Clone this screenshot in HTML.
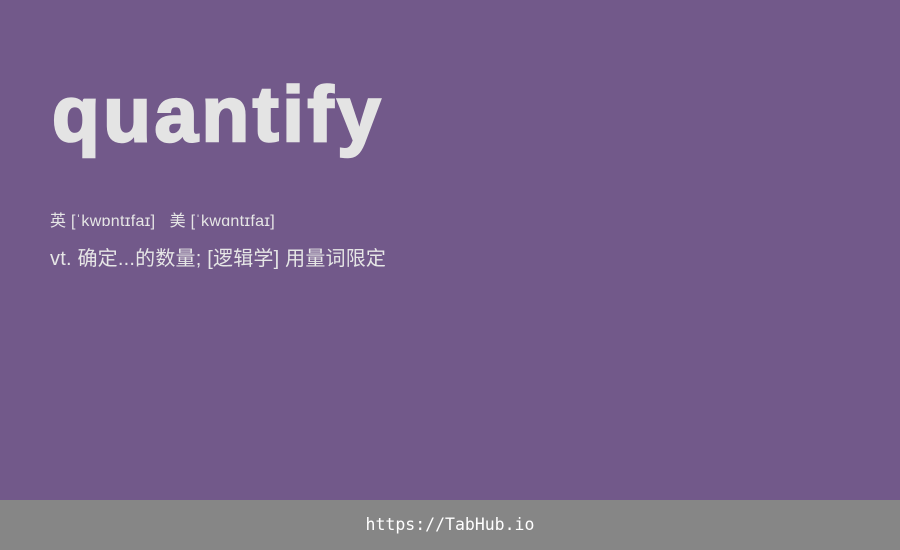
<!DOCTYPE html>
<html><head><meta charset="utf-8"><style>
body{margin:0;width:900px;height:550px;background:#72598a;position:relative;overflow:hidden;font-family:"Liberation Sans","Noto Sans CJK SC",sans-serif;color:#e6e6e6}
.w{position:absolute;left:52px;top:64px;font-size:78px;font-weight:bold;line-height:100px;color:#e4e4e4;-webkit-text-stroke:2.5px #e4e4e4;letter-spacing:3.6px}
.p{position:absolute;left:50px;top:212px;font-size:16px;line-height:20px;letter-spacing:0.3px}
.d{position:absolute;left:50px;top:247px;font-size:20px;line-height:24px;letter-spacing:0.2px}
.f{position:absolute;left:0;top:500px;width:900px;height:50px;background:#868686;color:#fff;font-family:"DejaVu Sans Mono","Liberation Mono",monospace;font-size:16.5px;line-height:50px;text-align:center}
</style></head><body>
<div class="w">quantify</div>
<div class="p">英 [ˈkwɒntɪfaɪ]&nbsp;&nbsp;&nbsp;美 [ˈkwɑntɪfaɪ]</div>
<div class="d">vt. 确定...的数量; [逻辑学] 用量词限定</div>
<div class="f">https://TabHub.io</div>
</body></html>
